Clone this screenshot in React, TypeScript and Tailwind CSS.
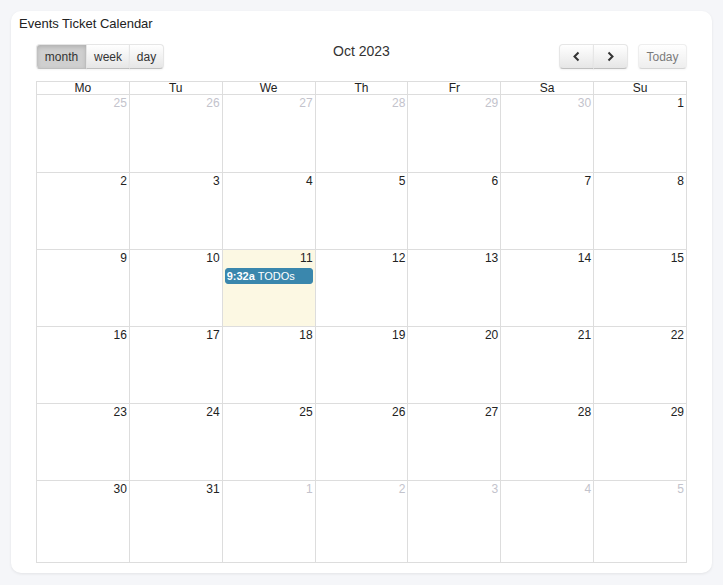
import React from "react";

const weeks: { d: number; other?: boolean; today?: boolean }[][] = [
  [25, 26, 27, 28, 29, 30].map((d) => ({ d, other: true })).concat([{ d: 1 }]),
  [2, 3, 4, 5, 6, 7, 8].map((d) => ({ d })),
  [9, 10, 11, 12, 13, 14, 15].map((d) => ({ d, today: d === 11 })),
  [16, 17, 18, 19, 20, 21, 22].map((d) => ({ d })),
  [23, 24, 25, 26, 27, 28, 29].map((d) => ({ d })),
  [{ d: 30 }, { d: 31 }].concat([1, 2, 3, 4, 5].map((d) => ({ d, other: true }))),
];

const rowH = ["h-[78px]", "h-[77px]", "h-[77px]", "h-[77px]", "h-[77px]", "h-[82px]"];

const btn =
  "h-[25px] flex items-center justify-center text-[12px] text-[#333] border border-[#e6e6e6] border-b-[#bfbfbf] bg-gradient-to-b from-white to-[#e6e6e6] shadow-[inset_0_1px_0_rgba(255,255,255,0.2),0_1px_2px_rgba(0,0,0,0.05)]";

function Chevron({ left }: { left?: boolean }) {
  return (
    <svg width="9" height="11" viewBox="0 0 9 11">
      <polyline
        points={left ? "6.5,1.5 2.5,5.5 6.5,9.5" : "2.5,1.5 6.5,5.5 2.5,9.5"}
        fill="none"
        stroke="#333"
        strokeWidth="2"
      />
    </svg>
  );
}

export default function App() {
  return (
    <div
      className="w-[723px] h-[585px] bg-[#f5f6f9] p-[11px]"
      style={{ fontFamily: '"Liberation Sans", Arial, sans-serif' }}
    >
      <div className="bg-white rounded-[10px] shadow-[0_1px_3px_rgba(0,0,0,0.08)] h-[562px] w-[701px] flex flex-col">
        <div className="pl-[8px] pt-[5px] h-[22px] text-[13px] leading-[15px] text-[#222]">
          Events Ticket Calendar
        </div>
        <div className="px-[25px] mt-[11px]">
          <div className="flex items-start justify-between h-[25px]">
            <div className="flex w-[245px]">
              <div className={`${btn} w-[51px] rounded-l-[4px] bg-none bg-[#cfcfcf] shadow-[inset_0_2px_4px_rgba(0,0,0,0.15),0_1px_2px_rgba(0,0,0,0.05)]`}>
                month
              </div>
              <div className={`${btn} w-[44px] -ml-px`}>week</div>
              <div className={`${btn} w-[35px] -ml-px rounded-r-[4px]`}>day</div>
            </div>
            <div className="text-[14px] leading-[16px] text-[#333] -mt-[1px]">Oct 2023</div>
            <div className="flex w-[245px] justify-end">
              <div className={`${btn} w-[35px] rounded-l-[4px]`}>
                <Chevron left />
              </div>
              <div className={`${btn} w-[35px] -ml-px rounded-r-[4px]`}>
                <Chevron />
              </div>
              <div className={`${btn} w-[49px] ml-[10px] rounded-[4px] opacity-65`}>Today</div>
            </div>
          </div>
          <div className="mt-[12px] border-t border-l border-[#ddd]">
            <div className="grid grid-cols-7">
              {["Mo", "Tu", "We", "Th", "Fr", "Sa", "Su"].map((n) => (
                <div
                  key={n}
                  className="h-[13px] border-r border-b border-[#ddd] text-center text-[12px] leading-[12px] text-[#222]"
                >
                  {n}
                </div>
              ))}
            </div>
            {weeks.map((w, i) => (
              <div key={i} className="grid grid-cols-7">
                {w.map((c, j) => (
                  <div
                    key={j}
                    className={`${rowH[i]} border-r border-b border-[#ddd] ${c.today ? "bg-[#fcf8e3]" : ""}`}
                  >
                    <div
                      className={`text-right pr-[2px] pt-[1px] text-[12px] leading-[14px] ${c.other ? "text-[#c3c3cc]" : "text-[#222]"}`}
                    >
                      {c.d}
                    </div>
                    {c.today && (
                      <div className="mx-[2px] mt-[3px] h-[16px] rounded-[3px] bg-[#3a87ad] border border-[#3a87ad] text-white text-[11px] leading-[14px] pl-[1px] whitespace-nowrap overflow-hidden">
                        <span className="font-bold">9:32a</span> TODOs
                      </div>
                    )}
                  </div>
                ))}
              </div>
            ))}
          </div>
        </div>
      </div>
    </div>
  );
}
